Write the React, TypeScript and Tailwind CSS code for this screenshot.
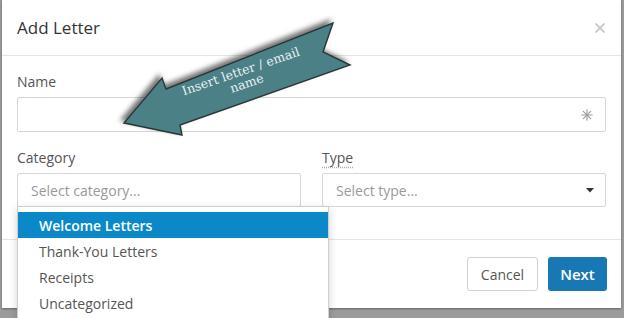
import React from "react";

function Asterisk() {
  return (
    <svg width="12" height="12" viewBox="0 0 12 12" fill="none" stroke="#9a9a9a" strokeWidth="1.1" strokeLinecap="round">
      <line x1="6" y1="0.8" x2="6" y2="11.2" />
      <line x1="0.8" y1="6" x2="11.2" y2="6" />
      <line x1="2.3" y1="2.3" x2="9.7" y2="9.7" />
      <line x1="9.7" y1="2.3" x2="2.3" y2="9.7" />
    </svg>
  );
}

function CloseX() {
  return (
    <svg width="10" height="10" viewBox="0 0 10 10" fill="none" stroke="#c2c2c2" strokeWidth="1.7" strokeLinecap="round">
      <line x1="1" y1="1" x2="9" y2="9" />
      <line x1="9" y1="1" x2="1" y2="9" />
    </svg>
  );
}

function Caret() {
  return (
    <svg width="8" height="5" viewBox="0 0 8 5">
      <polygon points="0,0 8,0 4,4.5" fill="#333" />
    </svg>
  );
}

function Arrow() {
  return (
    <svg className="pointer-events-none absolute left-0 top-0" width="624" height="318" viewBox="0 0 624 318">
      <defs>
        <filter id="arrowShadow" x="-20%" y="-30%" width="140%" height="160%">
          <feDropShadow dx="-3" dy="-3" stdDeviation="2.6" floodColor="#000" floodOpacity="0.55" />
        </filter>
      </defs>
      <polygon
        points="124,123 162,78 166,89 333,23 323,52 350,65 180,125 182,135"
        fill="#4b8087"
        stroke="#2b3637"
        strokeWidth="1.4"
        strokeLinejoin="miter"
        filter="url(#arrowShadow)"
      />
      <text
        x="241"
        y="72"
        transform="rotate(-19 241 72)"
        textAnchor="middle"
        dominantBaseline="middle"
        fill="#e9f1f1"
        fontSize="12.5"
        fontFamily="'DejaVu Serif', 'Liberation Serif', serif"
      >
        Insert letter / email
      </text>
      <text
        x="247"
        y="84"
        transform="rotate(-19 247 84)"
        textAnchor="middle"
        dominantBaseline="middle"
        fill="#e9f1f1"
        fontSize="12.5"
        fontFamily="'DejaVu Serif', 'Liberation Serif', serif"
      >
        name
      </text>
    </svg>
  );
}

export default function App() {
  const items = ["Welcome Letters", "Thank-You Letters", "Receipts", "Uncategorized"];
  return (
    <div className="relative h-[318px] w-[624px] overflow-hidden bg-[#9b9b9b] font-['Open_Sans',sans-serif]">
      <div className="ml-[2px] flex h-[308px] w-[619px] flex-col bg-white shadow-[0_1px_2px_rgba(0,0,0,0.35)]">
        <div className="flex h-[56px] items-center justify-between border-b border-[#e5e5e5] pl-[15px] pr-[16px]">
          <span className="text-[17px] leading-none text-[#333]">Add Letter</span>
          <CloseX />
        </div>
        <div className="px-[15px] pb-[32px] pt-[16px]">
          <div className="mb-[5px] text-[14px] leading-[20px] text-[#555]">Name</div>
          <div className="flex h-[35px] items-center justify-end rounded-[2px] border border-[#d6d6d6] pr-[12px]">
            <Asterisk />
          </div>
          <div className="mt-[16px] grid grid-cols-2 gap-x-[21px]">
            <div>
              <div className="mb-[5px] text-[14px] leading-[20px] text-[#555]">Category</div>
              <div className="flex h-[34px] items-center rounded-[2px] border border-[#d6d6d6] pl-[13px] text-[14px] text-[#999]">
                Select category...
              </div>
            </div>
            <div>
              <div className="mb-[5px] text-[14px] leading-[20px] text-[#555]">
                <span className="underline decoration-[#aaa] decoration-dotted underline-offset-[4px]">Type</span>
              </div>
              <div className="flex h-[34px] items-center justify-between rounded-[2px] border border-[#d6d6d6] pl-[13px] pr-[11px] text-[14px] text-[#999]">
                <span>Select type...</span>
                <Caret />
              </div>
            </div>
          </div>
        </div>
        <div className="flex flex-1 items-start justify-end gap-[10px] border-t border-[#e5e5e5] pr-[14px] pt-[17px]">
          <button className="flex h-[34px] w-[71px] items-center justify-center rounded-[3px] border border-[#d0d0d0] bg-white text-[14px] text-[#555]">
            Cancel
          </button>
          <button className="flex h-[34px] w-[59px] items-center justify-center rounded-[3px] bg-[#1878b4] text-[15px] font-semibold text-white">
            Next
          </button>
        </div>
      </div>

      <div className="absolute left-[17px] top-[206px] h-[130px] w-[312px] border border-[#cfcfcf] bg-white pt-[5px] shadow-[0_3px_8px_rgba(0,0,0,0.18)]">
        {items.map((t, i) => (
          <div
            key={t}
            className={
              i === 0
                ? "flex h-[26px] items-center bg-[#0b88c8] pl-[21px] text-[14px] font-semibold text-white"
                : "flex h-[26px] items-center pl-[21px] text-[14px] text-[#555]"
            }
          >
            {t}
          </div>
        ))}
      </div>

      <Arrow />
    </div>
  );
}
